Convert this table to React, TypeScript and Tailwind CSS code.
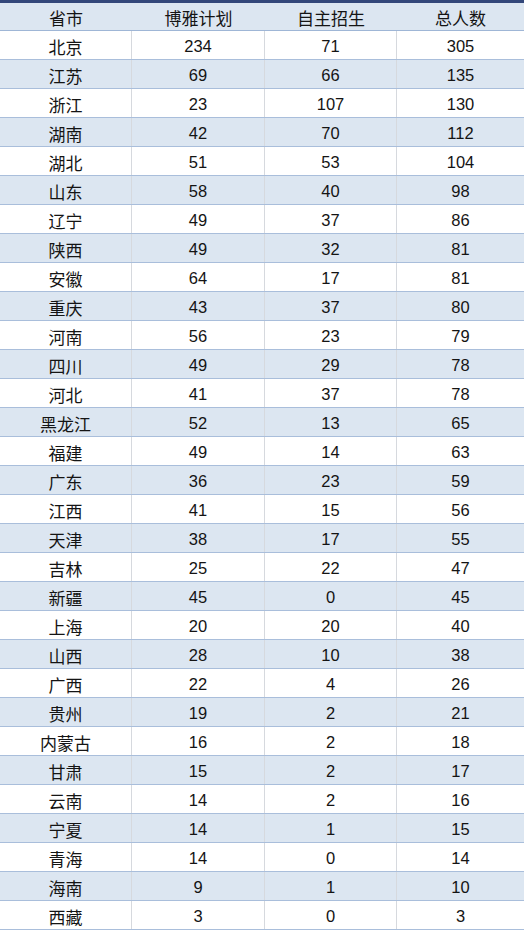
const rows: [string, number, number, number][] = [
  ["北京", 234, 71, 305],
  ["江苏", 69, 66, 135],
  ["浙江", 23, 107, 130],
  ["湖南", 42, 70, 112],
  ["湖北", 51, 53, 104],
  ["山东", 58, 40, 98],
  ["辽宁", 49, 37, 86],
  ["陕西", 49, 32, 81],
  ["安徽", 64, 17, 81],
  ["重庆", 43, 37, 80],
  ["河南", 56, 23, 79],
  ["四川", 49, 29, 78],
  ["河北", 41, 37, 78],
  ["黑龙江", 52, 13, 65],
  ["福建", 49, 14, 63],
  ["广东", 36, 23, 59],
  ["江西", 41, 15, 56],
  ["天津", 38, 17, 55],
  ["吉林", 25, 22, 47],
  ["新疆", 45, 0, 45],
  ["上海", 20, 20, 40],
  ["山西", 28, 10, 38],
  ["广西", 22, 4, 26],
  ["贵州", 19, 2, 21],
  ["内蒙古", 16, 2, 18],
  ["甘肃", 15, 2, 17],
  ["云南", 14, 2, 16],
  ["宁夏", 14, 1, 15],
  ["青海", 14, 0, 14],
  ["海南", 9, 1, 10],
  ["西藏", 3, 0, 3],
];

const cols = "grid grid-cols-[132px_133px_132px_1fr]";

export default function App() {
  return (
    <div
      className="w-[524px] h-[930px] overflow-hidden bg-white text-[17px] text-[#141414] border-t-[3px] border-[#33477a]"
      style={{ fontFamily: '"Noto Sans CJK SC", "Liberation Sans", sans-serif' }}
    >
      <div className={`${cols} h-[28px] bg-[#dce6f1] border-b border-[#9fb6d6]`}>
        {["省市", "博雅计划", "自主招生", "总人数"].map((h) => (
          <div key={h} className="flex items-center justify-center leading-none pt-[2px]">
            {h}
          </div>
        ))}
      </div>
      {rows.map((r, i) => (
        <div
          key={r[0]}
          className={`${cols} h-[29px] border-b border-[#a9bedb] ${i % 2 === 1 ? "bg-[#dce6f1]" : "bg-white"}`}
        >
          {r.map((c, j) => (
            <div
              key={j}
              className={`flex items-center justify-center leading-none pt-[3px] ${j < 3 ? "border-r border-[#d6d9de]" : ""}`}
              style={j > 0 ? { fontFamily: '"Liberation Sans", "Noto Sans CJK SC", sans-serif', fontSize: "16.5px" } : undefined}
            >
              {c}
            </div>
          ))}
        </div>
      ))}
    </div>
  );
}
